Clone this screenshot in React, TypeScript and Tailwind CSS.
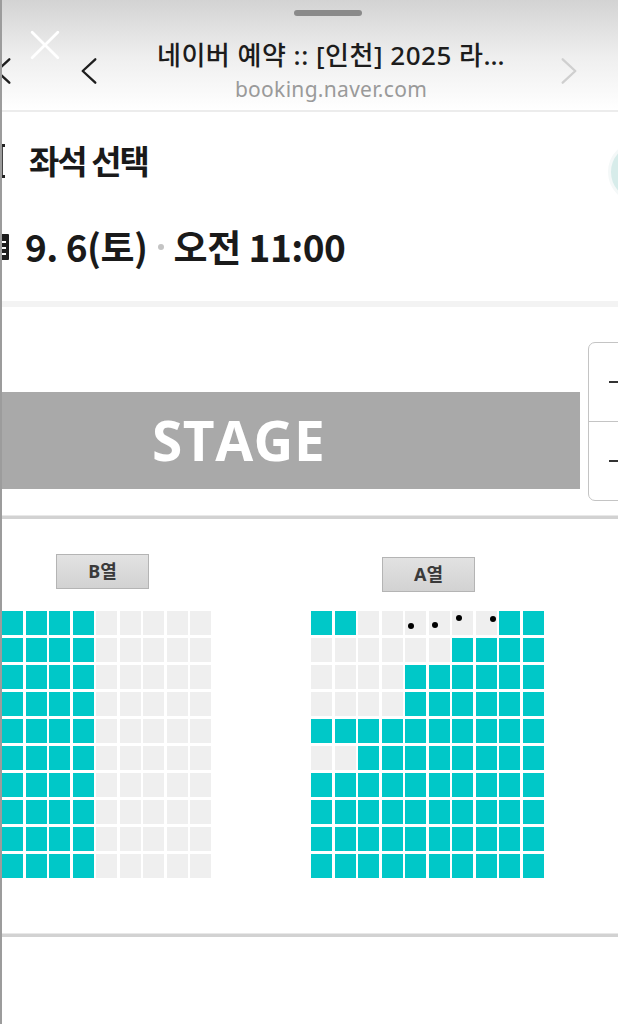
const aRows = [
  'TTGGGGGGTT',
  'GGGGGGTTTT',
  'GGGGTTTTTT',
  'GGGGTTTTTT',
  'TTTTTTTTTT',
  'GGTTTTTTTT',
  'TTTTTTTTTT',
  'TTTTTTTTTT',
  'TTTTTTTTTT',
  'TTTTTTTTTT',
];

const bRows = Array.from({ length: 10 }, () => 'TTTTGGGGG');

// black marks drawn on the first A row: column -> dot offset inside the cell
const dots: Record<number, { x: number; y: number }> = {
  4: { x: 3, y: 12 },
  5: { x: 3, y: 11 },
  6: { x: 4, y: 4 },
  7: { x: 14, y: 5 },
};

function Seat({ on, dot }: { on: boolean; dot?: { x: number; y: number } }) {
  return (
    <div className={`relative w-[21px] h-[24px] ${on ? 'bg-[#00c8c8]' : 'bg-[#efefef]'}`}>
      {dot && (
        <span
          className="absolute w-[6px] h-[6px] rounded-full bg-black"
          style={{ left: dot.x, top: dot.y }}
        />
      )}
    </div>
  );
}

function SeatBlock({ rows, marks }: { rows: string[]; marks?: boolean }) {
  return (
    <div className="flex flex-col gap-y-[3px]">
      {rows.map((row, r) => (
        <div key={r} className="flex gap-x-[2.5px]">
          {row.split('').map((c, i) => (
            <Seat key={i} on={c === 'T'} dot={marks && r === 0 ? dots[i] : undefined} />
          ))}
        </div>
      ))}
    </div>
  );
}

function RowLabel({ text }: { text: string }) {
  return (
    <div className="w-[93px] h-[35px] flex items-center justify-center bg-linear-to-b from-[#e2e2e2] to-[#d2d2d2] border border-[#b4b4b4] text-[18px] font-bold text-[#3a3a3a]">
      {text}
    </div>
  );
}

function Chevron({ dir, className }: { dir: 'left' | 'right'; className: string }) {
  return (
    <svg viewBox="0 0 20 30" className={className} fill="none" stroke="currentColor" strokeWidth="2.6" strokeLinecap="round" strokeLinejoin="round">
      {dir === 'left' ? <path d="M17 2 L3 15 L17 28" /> : <path d="M3 2 L17 15 L3 28" />}
    </svg>
  );
}

export default function App() {
  return (
    <div
      className="min-h-[1024px] bg-white border-l-2 border-[#9c9c9c] overflow-hidden"
      style={{ fontFamily: '"Noto Sans", "Noto Sans CJK KR", sans-serif' }}
    >
      {/* browser sheet header */}
      <div className="relative h-[112px] bg-linear-to-b from-[#d3d3d3] via-[#eeeeee] to-white border-b-2 border-[#ececec]">
        <div className="flex justify-center pt-[10px] pl-[36px]">
          <div className="w-[68px] h-[6px] rounded-full bg-[#8a8a8a]" />
        </div>
        <svg viewBox="0 0 28 28" className="absolute left-[28px] top-[30px] w-[30px] h-[30px] text-white" fill="none" stroke="currentColor" strokeWidth="2.6" strokeLinecap="round">
          <path d="M2 2 L26 26 M26 2 L2 26" />
        </svg>
        <div className="flex items-start mt-[25px]">
          <Chevron dir="left" className="w-[18px] h-[28px] -ml-[8px] mt-[16px] text-[#1e1e1e]" />
          <Chevron dir="left" className="w-[18px] h-[28px] ml-[68px] mt-[16px] text-[#1e1e1e]" />
          <div className="flex-1 flex flex-col items-center pl-[4px]">
            <div className="text-[26px] leading-[29px] font-medium text-[#1c1c1c] tracking-[0.5px]">
              네이버 예약 :: [인천] 2025 라…
            </div>
            <div className="mt-[7px] text-[21px] leading-[24px] text-[#9a9a9a] tracking-[0.3px]">booking.naver.com</div>
          </div>
          <Chevron dir="right" className="w-[18px] h-[28px] mr-[40px] mt-[16px] text-[#cfcfcf]" />
        </div>
      </div>

      {/* title + date */}
      <div className="relative border-b-[6px] border-[#f3f3f3]">
        <div className="flex items-center h-[66px] mt-[16px]">
          <div className="flex flex-col justify-between h-[34px] w-[4px] -ml-[1px]">
            <span className="block w-[4px] h-[3px] bg-[#222]" />
            <span className="block w-[2px] h-[28px] bg-[#444]" />
            <span className="block w-[4px] h-[3px] bg-[#222]" />
          </div>
          <h1 className="ml-[24px] text-[33px] font-semibold text-[#1a1a1a] tracking-[-2px]" style={{ fontFamily: '"Noto Sans CJK KR", sans-serif' }}>
            좌석 선택
          </h1>
        </div>
        <div className="flex items-center h-[50px] mt-[28px] mb-[29px]">
          <svg viewBox="0 0 8 26" className="w-[8px] h-[26px] -ml-[1px]">
            <rect x="0" y="0" width="8" height="26" rx="1" fill="#1d1d1d" />
            <rect x="0" y="7" width="5" height="2" fill="#fff" />
            <rect x="0" y="13" width="5" height="2" fill="#fff" />
            <rect x="0" y="19" width="5" height="2" fill="#fff" />
          </svg>
          <div className="ml-[16px] flex items-center text-[37px] font-semibold text-[#1a1a1a] tracking-[-0.5px]" style={{ fontFamily: '"Noto Sans CJK KR", sans-serif' }}>
            <span>9. 6(토)</span>
            <span className="mx-[10px] w-[6px] h-[6px] rounded-full bg-[#c4c4c4]" />
            <span>오전 11:00</span>
          </div>
        </div>
        <div className="absolute -right-[52px] top-[13px] w-[62px] h-[62px] rounded-full bg-[#d7ecea] border-[3px] border-[#f4f8f8]" />
      </div>

      {/* seat map */}
      <div className="pt-[35px]">
        <div className="flex items-start">
          <div className="flex-1 h-[97px] mt-[50px] bg-[#a9a9a9] flex items-center pl-[150px]">
            <span className="text-[55px] font-bold text-white tracking-[0.5px]" style={{ fontFamily: '"Open Sans", sans-serif' }}>
              STAGE
            </span>
          </div>
          <div className="ml-[8px] -mr-[20px] w-[50px] h-[159px] rounded-[7px] border border-[#c4c4c4] bg-white flex flex-col">
            <div className="flex-1 flex items-center pl-[20px] border-b border-[#c4c4c4]">
              <span className="w-[12px] h-[2px] bg-[#333]" />
            </div>
            <div className="flex-1 flex items-center pl-[20px]">
              <span className="w-[12px] h-[2px] bg-[#333]" />
            </div>
          </div>
        </div>

        <div className="mt-[14px] h-[4px] bg-[#d2d2d2] border-t border-[#e8e8e8]" />

        <div className="flex items-start pt-[35px]">
          <div className="flex flex-col">
            <div className="ml-[54px]">
              <RowLabel text="B열" />
            </div>
            <div className="mt-[22px]">
              <SeatBlock rows={bRows} />
            </div>
          </div>
          <div className="flex flex-col ml-[100px]">
            <div className="ml-[71px] mt-[3px]">
              <RowLabel text="A열" />
            </div>
            <div className="mt-[19px]">
              <SeatBlock rows={aRows} marks />
            </div>
          </div>
        </div>

        <div className="mt-[55px] h-[4px] bg-[#d2d2d2] border-t border-[#e8e8e8]" />
      </div>
    </div>
  );
}
